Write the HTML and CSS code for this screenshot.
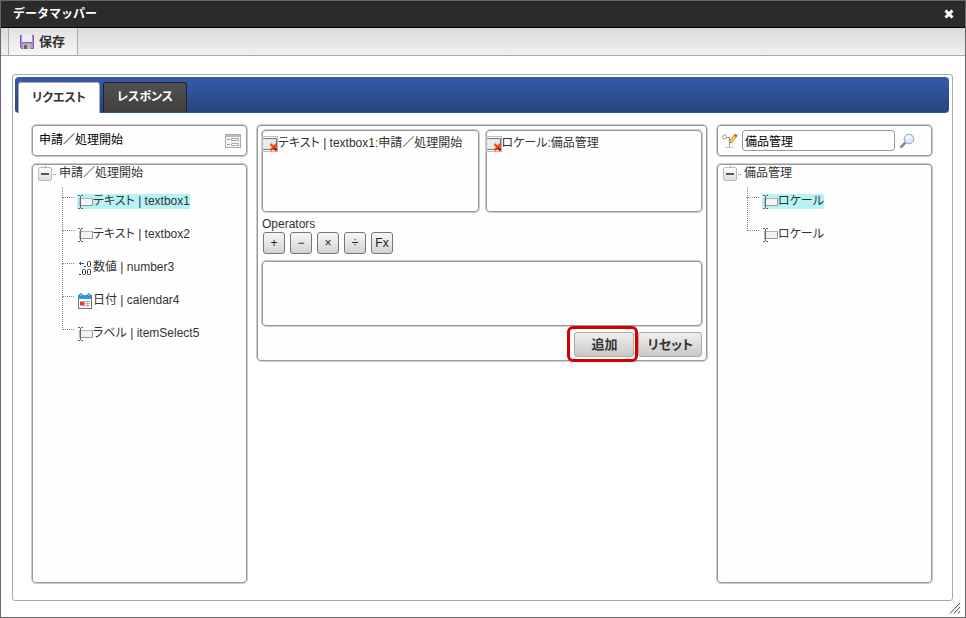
FILE: index.html
```html
<!DOCTYPE html>
<html lang="ja">
<head>
  <meta charset="UTF-8" />
  <meta name="viewport" content="width=device-width, initial-scale=1.0" />
  <title>データマッパー</title>
  <link rel="stylesheet" href="styles.css">
</head>
<body>
  <!-- shared icons -->
  <svg class="sprite" width="0" height="0" aria-hidden="true">
    <symbol id="icon-textbox" viewBox="0 0 16 16">
      <rect x="2.500" y="4.500" width="13" height="7" fill="#f3f3f3" stroke="#b5b5b5"/>
      <path d="M3 11.500h12.500v-7" fill="none" stroke="#999"/>
      <path d="M1 1.500h2M4 1.500h2M3.500 2v12M1 14.500h2M4 14.500h2" fill="none" stroke="#666"/>
    </symbol>
    <symbol id="icon-remove" viewBox="0 0 16 16">
      <rect x=".5" y=".5" width="15" height="15" fill="#fff" stroke="#bbb"/>
      <rect x="1" y="2" width="13" height="11" fill="#e6e6e6"/>
      <path d="M1 2.500h13.500v11H1" fill="none" stroke="#777"/>
      <path d="M3.500 4v6M6.500 4v5" stroke="#fafafa"/>
      <path d="M8.500 8l6 6.500M14.500 8l-6 6.500" stroke="#f04a1c" stroke-width="2.400"/>
      <path d="M12 11.500l2.500 3" stroke="#d00" stroke-width="2"/>
    </symbol>
  </svg>

  <div class="window">
    <div class="titlebar">
      <span class="title">データマッパー</span>
      <button class="btn-icon" aria-label="閉じる">
        <svg width="10" height="10" viewBox="0 0 10 10"><path d="M1.500 1.500l7 7M8.500 1.500l-7 7" stroke="#fff" stroke-width="3"/></svg>
      </button>
    </div>

    <div class="toolbar">
      <button class="btn-save">
        <svg width="16" height="16" viewBox="0 0 16 16">
          <path d="M1.500 1.500h13v13h-12l-1-1z" fill="#b58bd0" stroke="#8558a8"/>
          <rect x="3" y="1" width="10" height="7" fill="#e9edf4"/>
          <path d="M3 8.500h10" stroke="#8f62b0"/>
          <rect x="4" y="10" width="8" height="5" fill="#bbb"/>
          <rect x="5" y="11" width="3" height="4" fill="#666"/>
        </svg>
        保存
      </button>
    </div>

    <div class="panel">
      <div class="tabs">
        <button class="tab active">リクエスト</button>
        <button class="tab">レスポンス</button>
      </div>

      <div class="columns">
        <div class="side">
          <div class="box source">
            <span>申請／処理開始</span>
            <button class="btn-icon" aria-label="一覧">
              <svg width="16" height="14" viewBox="0 0 16 14">
                <rect x=".5" y=".5" width="15" height="13" fill="#f6f6f6" stroke="#aaa"/>
                <rect x="1" y="1" width="14" height="2" fill="#bbb"/>
                <path d="M2 5.500h3M2 10.500h3" stroke="#999"/>
                <path d="M6.500 4.500h7v2h-7zM6.500 9.500h7v2h-7z" fill="#fff" stroke="#aaa"/>
              </svg>
            </button>
          </div>
          <div class="box tree">
            <div class="root">
              <button class="toggle" aria-label="折りたたむ"></button>
              <span>申請／処理開始</span>
            </div>
            <ul>
              <li><span class="node selected"><svg class="icon"><use href="#icon-textbox"/></svg><span class="kana">テキスト</span> | textbox1</span></li>
              <li><span class="node"><svg class="icon"><use href="#icon-textbox"/></svg><span class="kana">テキスト</span> | textbox2</span></li>
              <li><span class="node"><svg class="icon" viewBox="0 0 16 16">
                <path d="M2 3.500h5M3.500 2v3" stroke="#2f4fb5" fill="none"/>
                <path d="M7 6h2v1H7zM2 14h2v1H2z" fill="#333"/>
                <rect x="10.500" y="1.500" width="3" height="5" rx="1" fill="none" stroke="#333"/>
                <rect x="5.500" y="9.500" width="3" height="5" rx="1" fill="none" stroke="#333"/>
                <rect x="10.500" y="9.500" width="3" height="5" rx="1" fill="none" stroke="#333"/>
              </svg>数値 | number3</span></li>
              <li><span class="node"><svg class="icon" viewBox="0 0 16 16">
                <rect x="1.500" y="2.500" width="13" height="13" fill="#fff" stroke="#777"/>
                <rect x="1" y="2" width="14" height="4" fill="#2e9be0"/>
                <circle cx="4" cy="2" r="1.300" fill="#fff" stroke="#2478b5"/>
                <circle cx="12" cy="2" r="1.300" fill="#fff" stroke="#2478b5"/>
                <path d="M3 8.500h10M3 10.500h10M3 12.500h10M7.500 8v6M10.500 8v6" stroke="#b5b5b5"/>
                <rect x="3" y="9" width="4" height="3" fill="#e0402a"/>
              </svg>日付 | calendar4</span></li>
              <li><span class="node"><svg class="icon"><use href="#icon-textbox"/></svg><span class="kana">ラベル</span> | itemSelect5</span></li>
            </ul>
          </div>
        </div>

        <div class="box mapper">
          <div class="operands">
            <div class="box operand"><svg class="icon"><use href="#icon-remove"/></svg><span class="kana">テキスト</span> | textbox1:申請／処理開始</div>
            <div class="box operand"><svg class="icon"><use href="#icon-remove"/></svg><span class="kana">ロケール</span>:備品管理</div>
          </div>
          <label class="caption" for="formula">Operators</label>
          <div class="operators">
            <button>+</button>
            <button>−</button>
            <button>×</button>
            <button>÷</button>
            <button>Fx</button>
          </div>
          <textarea class="box formula" id="formula"></textarea>
          <div class="actions">
            <button class="btn highlight">追加</button>
            <button class="btn">リセット</button>
          </div>
        </div>

        <div class="side">
          <div class="box search">
            <svg width="16" height="16" viewBox="0 0 16 16" aria-hidden="true">
              <circle cx="2.500" cy="4" r="2" fill="#fff" stroke="#999"/>
              <path d="M5 4.500h2.500v4" stroke="#999" fill="none"/>
              <path d="M8 9.500l5.500-7" stroke="#b98a1c" stroke-width="3.500"/>
              <path d="M8 9.500l5.500-7" stroke="#ffd94d" stroke-width="2"/>
              <path d="M13 3.500l1.500-2" stroke="#d8604a" stroke-width="3"/>
              <path d="M6.500 11l1.500-2.500 1 1z" fill="#444"/>
              <path d="M7.500 11v4" stroke="#777" stroke-dasharray="1 1"/>
              <path d="M3 14.500h9" stroke="#ccc"/>
            </svg>
            <input type="text" aria-label="検索" value="備品管理">
            <button class="btn-icon" aria-label="検索する">
              <svg width="16" height="16" viewBox="0 0 16 16">
                <path d="M1.500 14.500l5-5" stroke="#888" stroke-width="2.500"/>
                <circle cx="10" cy="6" r="4.800" fill="#dce9f8" stroke="#9aa5b3"/>
                <path d="M7 5.500a3 3 0 0 1 6 0z" fill="#f4f9ff"/>
              </svg>
            </button>
          </div>
          <div class="box tree">
            <div class="root">
              <button class="toggle" aria-label="折りたたむ"></button>
              <span>備品管理</span>
            </div>
            <ul>
              <li><span class="node selected"><svg class="icon"><use href="#icon-textbox"/></svg><span class="kana">ロケール</span></span></li>
              <li><span class="node"><svg class="icon"><use href="#icon-textbox"/></svg><span class="kana">ロケール</span></span></li>
            </ul>
          </div>
        </div>
      </div>
    </div>

    <svg class="grip" width="12" height="12" viewBox="0 0 12 12" aria-hidden="true"><path d="M1 11.500l10-10.500M5 11.500l6-6.500M9 11.500l2-2.500" stroke="#444" fill="none"/></svg>
  </div>
</body>
</html>
```

FILE: styles.css
```css
* { box-sizing: border-box; }
body {
  margin: 0;
  font-family: "Liberation Sans", "Noto Sans CJK JP", sans-serif;
  font-size: 12px;
  line-height: 15px;
  color: #333;
  background: #fff;
}
button, input, textarea { font: inherit; color: inherit; }
button { padding: 0; cursor: pointer; }
svg { display: block; flex: none; }
.sprite { position: absolute; }
.window {
  position: relative;
  display: flex;
  flex-direction: column;
  min-height: 100vh;
  border: 1px solid #666;
  padding-bottom: 16px;
}
.titlebar {
  display: flex;
  align-items: center;
  justify-content: space-between;
  height: 27px;
  padding: 0 11px 0 12px;
  background: #2b2b2b;
  border-bottom: 1px solid #000;
  color: #fff;
}
.title { font-weight: bold; }
.btn-icon { border: none; background: none; }
.toolbar {
  display: flex;
  height: 28px;
  padding-left: 7px;
  background: linear-gradient(#dadada, #f0f0f0);
  border-bottom: 1px solid #aaa;
}
.btn-save {
  display: flex;
  align-items: center;
  gap: 4px;
  padding: 0 12px 0 10px;
  border: 1px solid #aaa;
  border-width: 0 1px;
  background: linear-gradient(#e2e2e2, #f6f6f6);
  font-size: 13px;
  font-weight: bold;
}
.panel {
  flex: 1;
  display: flex;
  flex-direction: column;
  margin: 18px 12px 0 11px;
  padding: 2px;
  border: 1px solid #aaa;
  border-radius: 3px;
}
.tabs {
  display: flex;
  gap: 3px;
  height: 36px;
  margin-right: 1px;
  padding: 4px 3px 0;
  border-radius: 4px;
  background: linear-gradient(#3659a8, #29457f);
  border: 1px solid #3059a8;
  border-width: 1px 0;
}
.tab {
  padding: 0 13px;
  border: 1px solid #222;
  border-bottom: none;
  border-radius: 3px 3px 0 0;
  background: linear-gradient(#505050, #404040);
  color: #fff;
  font-weight: bold;
  font-feature-settings: "palt";
}
.tab.active {
  margin-bottom: -1px;
  border-color: #aaa;
  background: #fff;
  color: #333;
}
.columns {
  flex: 1;
  display: flex;
  gap: 8px;
  padding: 11px 17px 14px 16px;
}
.box {
  border: 1px solid #ccc;
  border-radius: 5px;
  background: #fefefe;
  box-shadow: inset 0 0 0 1px #999;
}
.side {
  display: flex;
  flex-direction: column;
  gap: 6px;
  width: 217px;
}
.source, .search {
  display: flex;
  align-items: center;
  height: 33px;
  color: #000;
}
.source { justify-content: space-between; padding: 0 6px 0 7px; }
.search { gap: 4px; padding: 0 17px 0 5px; }
.search input {
  flex: 1;
  min-width: 0;
  height: 21px;
  padding: 0 2px;
  border: 1px solid #999;
  border-radius: 3px;
  background: #fff;
}

/* tree */
.tree { flex: 1; padding: 1px; }
.root {
  display: flex;
  gap: 7px;
  padding: 1px 0 0 5px;
}
.toggle {
  position: relative;
  width: 14px;
  height: 14px;
  margin-top: 1px;
  border: 1px solid #bbb;
  border-radius: 2px;
  background: linear-gradient(#fff, #ddd);
}
.toggle::before {
  content: "";
  position: absolute;
  left: 2px;
  top: 5px;
  width: 8px;
  height: 2px;
  background: #555;
}
/* dotted stubs above and beside the toggle */
.toggle::after {
  content: "";
  position: absolute;
  left: 14px;
  top: 6px;
  width: 1px;
  height: 1px;
  background: #888;
  box-shadow: 2px 0 #888, -8px -8px #888, -8px -10px #888;
}
.tree ul {
  list-style: none;
  margin: 4px 0 0;
  padding-left: 29px;
}
.tree li {
  display: flex;
  align-items: center;
  gap: 3px;
  height: 33px;
}
.tree li::before {
  content: "";
  align-self: flex-start;
  width: 11px;
  height: 33px;
  margin-top: -21px;
  border: 1px dotted #888;
  border-width: 0 0 1px 1px;
}
.tree li:first-child::before { height: 10px; margin-top: 2px; }
.node { white-space: pre; }
.selected { background: #b6f3f4; }
.icon {
  display: inline-block;
  width: 16px;
  height: 16px;
  margin-bottom: -1px;
  vertical-align: top;
}
.kana { font-feature-settings: "palt"; }

/* mapping editor */
.mapper {
  flex: 1;
  align-self: flex-start;
  padding: 4px;
}
.operands { display: flex; gap: 5px; }
.operand {
  flex: 1;
  height: 84px;
  padding-top: 6px;
}
.caption { display: block; margin: 4px 1px 0; }
.operators {
  display: flex;
  gap: 5px;
  padding: 0 2px;
}
.operators button {
  width: 22px;
  height: 22px;
  border: 1px solid #777;
  border-radius: 3px;
  background: linear-gradient(#f8f8f8, #d2d2d2);
  color: #222;
}
.formula {
  display: block;
  width: 100%;
  height: 67px;
  margin-top: 6px;
  resize: none;
}
.actions {
  display: flex;
  justify-content: flex-end;
  gap: 4px;
  padding: 5px 1px 0;
}
.btn {
  position: relative;
  min-width: 60px;
  height: 25px;
  padding: 0 8px;
  border: 1px solid #aaa;
  border-radius: 3px;
  background: linear-gradient(#f0f0f0, #c8c8c8);
  font-size: 13px;
  font-weight: bold;
  font-feature-settings: "palt";
}
.highlight::after {
  content: "";
  position: absolute;
  inset: -7px -5px -6px -8px;
  border: 3px solid #d40000;
  border-radius: 6px;
}
.grip {
  position: absolute;
  right: 4px;
  bottom: 3px;
}
```
